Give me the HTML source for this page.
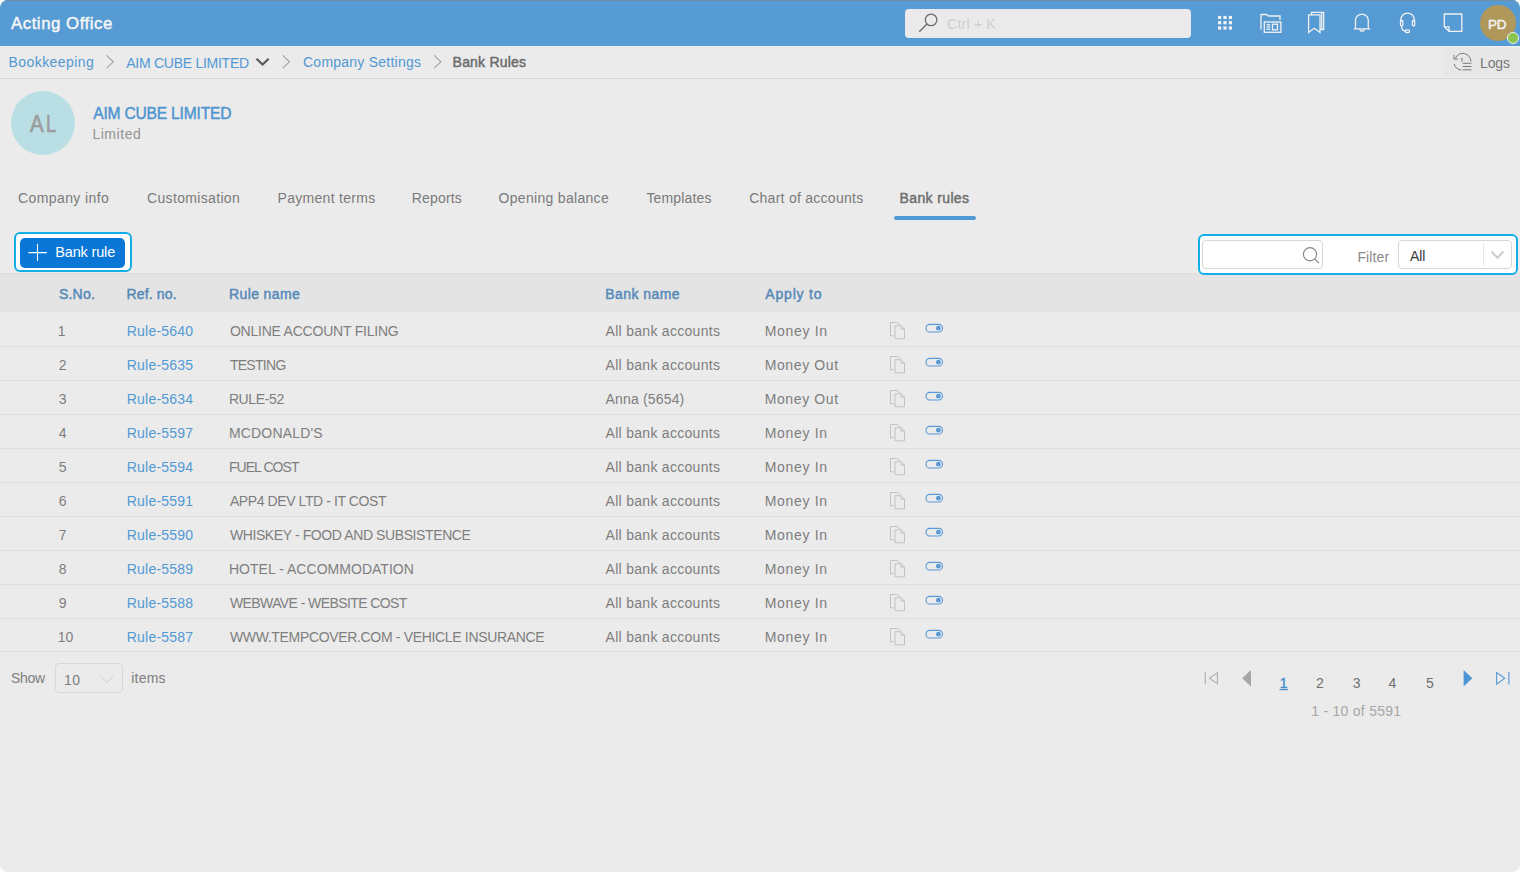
<!DOCTYPE html>
<html><head><meta charset="utf-8"><title>Bank Rules</title>
<style>
*{box-sizing:border-box;margin:0;padding:0}
html,body{width:1520px;height:872px;overflow:hidden;background:#ffffff;font-family:"Liberation Sans",sans-serif}
#app{position:absolute;left:0;top:0;width:1520px;height:872px;background:#ebebeb;border-radius:8px;overflow:hidden}
.t{position:absolute;white-space:nowrap;line-height:normal}
.a{position:absolute}
svg.a{overflow:visible}
#hdr{left:0;top:0;width:1520px;height:46px;background:#569bd3;border-top:1px solid #6a8eab}
#srch{left:905px;top:9px;width:286px;height:28.5px;background:#eaeaea;border-radius:4px}
#avatar{left:1480px;top:5px;width:36px;height:36px;border-radius:50%;background:#b0985b}
#dot{left:1506.5px;top:31.5px;width:12px;height:12px;border-radius:50%;background:#8bc550;border:1.6px solid #f2f2f2}
#crumbline{left:0;top:78px;width:1520px;height:1px;background:#d9d9d9}
#hline{left:0;top:46px;width:1520px;height:1px;background:#f0eeed}
#logs{left:1444px;top:47.5px;width:90px;height:28.5px;background:#e7e7e7;border-radius:4px}
#coav{left:11px;top:90.5px;width:64px;height:64px;border-radius:50%;background:#b9dfe5}
#tabline{left:894px;top:216px;width:81.5px;height:3.8px;border-radius:2px;background:#4f9ad5}
#btnring{left:14px;top:232px;width:118px;height:40px;border:2.2px solid #14aee9;border-radius:6px;background:#ffffff}
#btn{left:20px;top:238px;width:105px;height:29.5px;border-radius:5px;background:#0a76d6}
#fring{left:1198px;top:234px;width:320px;height:40.5px;border:2.3px solid #14aee9;border-radius:6px;background:#ffffff}
#finput{left:1202px;top:240px;width:121px;height:29px;border:1px solid #d6d6d6;border-radius:4px;background:#ffffff}
#fsel{left:1398px;top:240px;width:114px;height:29px;border:1px solid #d6d6d6;border-radius:4px;background:#ffffff}
#fdiv{left:1483px;top:243px;width:1px;height:23px;background:#e9e9e9}
#thead{left:0;top:273px;width:1520px;height:39px;background:#e4e4e4;border-top:1px solid #e0dfdd}
.rl{position:absolute;left:0;width:1520px;height:1px;background:#dedede}
#ssel{left:55px;top:663px;width:68px;height:30px;border:1px solid #d8d8d8;border-radius:4px}

</style></head>
<body>
<div id="app">
<div class="a" id="thead"></div>
<div class="a" id="hdr"></div>
<div class="a" id="hline"></div>
<div class="a" id="srch"></div>
<svg class="a" style="left:0;top:0" width="1" height="1"><circle cx="931.1" cy="19.9" r="5.8" fill="none" stroke="#6c6c6c" stroke-width="1.3"/><line x1="927" y1="24" x2="919.3" y2="31.8" stroke="#6c6c6c" stroke-width="1.3"/></svg>
<svg class="a" style="left:0;top:0" width="1" height="1"><rect x="1218" y="15.9" width="3.2" height="3.2" fill="#f3f3f3"/><rect x="1218" y="21.1" width="3.2" height="3.2" fill="#f3f3f3"/><rect x="1218" y="26.4" width="3.2" height="3.2" fill="#f3f3f3"/><rect x="1223.4" y="15.9" width="3.2" height="3.2" fill="#f3f3f3"/><rect x="1223.4" y="21.1" width="3.2" height="3.2" fill="#f3f3f3"/><rect x="1223.4" y="26.4" width="3.2" height="3.2" fill="#f3f3f3"/><rect x="1228.8" y="15.9" width="3.2" height="3.2" fill="#f3f3f3"/><rect x="1228.8" y="21.1" width="3.2" height="3.2" fill="#f3f3f3"/><rect x="1228.8" y="26.4" width="3.2" height="3.2" fill="#f3f3f3"/></svg>
<svg class="a" style="left:0;top:0" width="1" height="1" fill="none" stroke="#f1f1f1" stroke-width="1.3"><path d="M1261 29.5 V14.5 H1266.5 L1268.5 16 H1280 V20"/><rect x="1264.3" y="22" width="16.6" height="10.3"/><rect x="1272.5" y="24.2" width="5" height="5.6"/><line x1="1266.5" y1="24.8" x2="1270.3" y2="24.8"/><line x1="1266.5" y1="27" x2="1270.3" y2="27"/><line x1="1266.5" y1="29.2" x2="1270.3" y2="29.2"/></svg>
<svg class="a" style="left:0;top:0" width="1" height="1" fill="none" stroke="#f1f1f1" stroke-width="1.3"><path d="M1308.6 14.8 H1320 V32.5 L1314.3 28.2 L1308.6 32.5 Z"/><path d="M1311.5 14.8 V12.3 H1323.7 V29.5 L1320 29.5"/><line x1="1321.7" y1="12.3" x2="1321.7" y2="29.5"/></svg>
<svg class="a" style="left:0;top:0" width="1" height="1" fill="none" stroke="#f1f1f1" stroke-width="1.3"><path d="M1355.5 28.5 V20.5 A6.3 6.3 0 0 1 1368.3 20.5 V28.5"/><line x1="1353.8" y1="28.8" x2="1370.2" y2="28.8"/><path d="M1359.8 29 A2.2 2.2 0 0 0 1364.2 29"/></svg>
<svg class="a" style="left:0;top:0" width="1" height="1" fill="none" stroke="#f1f1f1" stroke-width="1.3"><path d="M1400.8 22 V19.8 A6.8 6.8 0 0 1 1414.4 19.8 V22"/><rect x="1400.5" y="20.5" width="2.3" height="5.3" rx="0.8"/><rect x="1412.4" y="20.5" width="2.3" height="5.3" rx="0.8"/><path d="M1401.6 26 Q1401.6 31 1405.5 31"/><rect x="1405.3" y="29.8" width="4.2" height="2.7" rx="1.3"/></svg>
<svg class="a" style="left:0;top:0" width="1" height="1" fill="none" stroke="#f1f1f1" stroke-width="1.3"><path d="M1444.3 14 H1461.8 V31.3 H1449 L1444.3 26.8 Z"/><path d="M1444.3 26.8 H1449 V31.3"/></svg>
<div class="a" id="avatar"></div>
<div class="a" id="dot"></div>
<div class="a" id="crumbline"></div>
<svg class="a" style="left:0;top:0" width="1" height="1" fill="none" stroke="#a5a09b" stroke-width="1.1"><path d="M106.6 55.3 L113.3 61.8 L106.6 68.2"/><path d="M282.8 55.3 L289.5 61.8 L282.8 68.2"/><path d="M434.2 55.3 L440.9 61.8 L434.2 68.2"/></svg>
<svg class="a" style="left:0;top:0" width="1" height="1" fill="none" stroke="#5a5a5a" stroke-width="2.2"><path d="M256.5 58.8 L262.6 64.6 L268.7 58.8"/></svg>
<div class="a" id="logs"></div>
<svg class="a" style="left:0;top:0" width="1" height="1" fill="none" stroke="#7a7a7a" stroke-width="1"><path d="M1470.9 61.6 A8.1 8.1 0 0 0 1455.3 58.4"/><path d="M1453.9 55 V59.1 H1458"/><path d="M1454.2 64 A8.3 8.3 0 0 0 1461.2 70"/><line x1="1461.9" y1="57.8" x2="1461.9" y2="61.8"/><line x1="1462.6" y1="63.3" x2="1471.4" y2="63.3"/><line x1="1462.6" y1="66.5" x2="1471.4" y2="66.5"/><line x1="1462.6" y1="69.8" x2="1471.4" y2="69.8"/></svg>
<div class="a" id="coav"></div>
<div class="a" id="tabline"></div>
<div class="a" id="btnring"></div>
<div class="a" id="btn"></div>
<svg class="a" style="left:0;top:0" width="1" height="1" stroke="#ffffff" stroke-width="1.1"><line x1="28.4" y1="252.6" x2="46.8" y2="252.6"/><line x1="37.5" y1="243.8" x2="37.5" y2="261"/></svg>
<div class="a" id="fring"></div>
<div class="a" id="finput"></div>
<svg class="a" style="left:0;top:0" width="1" height="1" fill="none" stroke="#868686" stroke-width="1.15"><circle cx="1310" cy="254.2" r="6.6"/><line x1="1314.7" y1="258.9" x2="1318.8" y2="263"/></svg>
<div class="a" id="fsel"></div>
<div class="a" id="fdiv"></div>
<svg class="a" style="left:0;top:0" width="1" height="1" fill="none" stroke="#cbcbcb" stroke-width="2"><path d="M1491.5 251.5 L1497.5 257.8 L1503.5 251.5"/></svg>
<div class="rl" style="top:346px"></div>
<div class="rl" style="top:380px"></div>
<div class="rl" style="top:414px"></div>
<div class="rl" style="top:448px"></div>
<div class="rl" style="top:482px"></div>
<div class="rl" style="top:516px"></div>
<div class="rl" style="top:550px"></div>
<div class="rl" style="top:584px"></div>
<div class="rl" style="top:618px"></div>
<div class="rl" style="top:651px"></div>
<svg class="a" style="left:0;top:0" width="1" height="1"><g fill="none" stroke="#c2c2c2" stroke-width="1"><path d="M894.5 335.8 H890.5 V322.5 H897.5 L900 325"/><path d="M895 325.8 H901.2 L904.5 329.2 V338.8 H895 Z"/><path d="M901.2 325.8 V329.2 H904.5"/></g><rect x="926" y="324.4" width="16.5" height="7.6" rx="3.8" fill="none" stroke="#5a9ad6" stroke-width="1.15"/><circle cx="938.4" cy="328.2" r="2.4" fill="#5a9ad6"/><g fill="none" stroke="#c2c2c2" stroke-width="1"><path d="M894.5 369.8 H890.5 V356.5 H897.5 L900 359"/><path d="M895 359.8 H901.2 L904.5 363.2 V372.8 H895 Z"/><path d="M901.2 359.8 V363.2 H904.5"/></g><rect x="926" y="358.4" width="16.5" height="7.6" rx="3.8" fill="none" stroke="#5a9ad6" stroke-width="1.15"/><circle cx="938.4" cy="362.2" r="2.4" fill="#5a9ad6"/><g fill="none" stroke="#c2c2c2" stroke-width="1"><path d="M894.5 403.8 H890.5 V390.5 H897.5 L900 393"/><path d="M895 393.8 H901.2 L904.5 397.2 V406.8 H895 Z"/><path d="M901.2 393.8 V397.2 H904.5"/></g><rect x="926" y="392.4" width="16.5" height="7.6" rx="3.8" fill="none" stroke="#5a9ad6" stroke-width="1.15"/><circle cx="938.4" cy="396.2" r="2.4" fill="#5a9ad6"/><g fill="none" stroke="#c2c2c2" stroke-width="1"><path d="M894.5 437.8 H890.5 V424.5 H897.5 L900 427"/><path d="M895 427.8 H901.2 L904.5 431.2 V440.8 H895 Z"/><path d="M901.2 427.8 V431.2 H904.5"/></g><rect x="926" y="426.4" width="16.5" height="7.6" rx="3.8" fill="none" stroke="#5a9ad6" stroke-width="1.15"/><circle cx="938.4" cy="430.2" r="2.4" fill="#5a9ad6"/><g fill="none" stroke="#c2c2c2" stroke-width="1"><path d="M894.5 471.8 H890.5 V458.5 H897.5 L900 461"/><path d="M895 461.8 H901.2 L904.5 465.2 V474.8 H895 Z"/><path d="M901.2 461.8 V465.2 H904.5"/></g><rect x="926" y="460.4" width="16.5" height="7.6" rx="3.8" fill="none" stroke="#5a9ad6" stroke-width="1.15"/><circle cx="938.4" cy="464.2" r="2.4" fill="#5a9ad6"/><g fill="none" stroke="#c2c2c2" stroke-width="1"><path d="M894.5 505.8 H890.5 V492.5 H897.5 L900 495"/><path d="M895 495.8 H901.2 L904.5 499.2 V508.8 H895 Z"/><path d="M901.2 495.8 V499.2 H904.5"/></g><rect x="926" y="494.4" width="16.5" height="7.6" rx="3.8" fill="none" stroke="#5a9ad6" stroke-width="1.15"/><circle cx="938.4" cy="498.2" r="2.4" fill="#5a9ad6"/><g fill="none" stroke="#c2c2c2" stroke-width="1"><path d="M894.5 539.8 H890.5 V526.5 H897.5 L900 529"/><path d="M895 529.8 H901.2 L904.5 533.2 V542.8 H895 Z"/><path d="M901.2 529.8 V533.2 H904.5"/></g><rect x="926" y="528.4" width="16.5" height="7.6" rx="3.8" fill="none" stroke="#5a9ad6" stroke-width="1.15"/><circle cx="938.4" cy="532.2" r="2.4" fill="#5a9ad6"/><g fill="none" stroke="#c2c2c2" stroke-width="1"><path d="M894.5 573.8 H890.5 V560.5 H897.5 L900 563"/><path d="M895 563.8 H901.2 L904.5 567.2 V576.8 H895 Z"/><path d="M901.2 563.8 V567.2 H904.5"/></g><rect x="926" y="562.4" width="16.5" height="7.6" rx="3.8" fill="none" stroke="#5a9ad6" stroke-width="1.15"/><circle cx="938.4" cy="566.2" r="2.4" fill="#5a9ad6"/><g fill="none" stroke="#c2c2c2" stroke-width="1"><path d="M894.5 607.8 H890.5 V594.5 H897.5 L900 597"/><path d="M895 597.8 H901.2 L904.5 601.2 V610.8 H895 Z"/><path d="M901.2 597.8 V601.2 H904.5"/></g><rect x="926" y="596.4" width="16.5" height="7.6" rx="3.8" fill="none" stroke="#5a9ad6" stroke-width="1.15"/><circle cx="938.4" cy="600.2" r="2.4" fill="#5a9ad6"/><g fill="none" stroke="#c2c2c2" stroke-width="1"><path d="M894.5 641.8 H890.5 V628.5 H897.5 L900 631"/><path d="M895 631.8 H901.2 L904.5 635.2 V644.8 H895 Z"/><path d="M901.2 631.8 V635.2 H904.5"/></g><rect x="926" y="630.4" width="16.5" height="7.6" rx="3.8" fill="none" stroke="#5a9ad6" stroke-width="1.15"/><circle cx="938.4" cy="634.2" r="2.4" fill="#5a9ad6"/></svg>
<div class="a" id="ssel"></div>
<svg class="a" style="left:0;top:0" width="1" height="1" fill="none" stroke="#cfcfcf" stroke-width="1"><path d="M100.3 676 L107 682.6 L113.7 676"/></svg>
<svg class="a" style="left:0;top:0" width="1" height="1"><line x1="1205.3" y1="672" x2="1205.3" y2="684.6" stroke="#b3b3b3" stroke-width="1.2"/><path d="M1217.4 672.8 L1209.4 678.3 L1217.4 683.8 Z" fill="none" stroke="#b3b3b3" stroke-width="1.1"/><path d="M1251 670 L1242.2 678.2 L1251 686.4 Z" fill="#a6a6a6"/><line x1="1279.5" y1="689.6" x2="1288" y2="689.6" stroke="#4a90cc" stroke-width="1.2"/><path d="M1463.6 670 L1472.3 678.2 L1463.6 686.4 Z" fill="#4c96d6"/><path d="M1496.6 672.5 L1504.8 678.3 L1496.6 684.2 Z" fill="none" stroke="#5a9ad6" stroke-width="1.1"/><line x1="1508.9" y1="672" x2="1508.9" y2="684.6" stroke="#5a9ad6" stroke-width="1.2"/></svg>
<span class="t" style="left:11.00px;top:14.04px;font-size:16.8px;color:#f6f6f6;-webkit-text-stroke:0.45px #f6f6f6;letter-spacing:0.542px">Acting Office</span>
<span class="t" style="left:947.00px;top:16.26px;font-size:14.5px;color:#cfcfcf;letter-spacing:0.018px">Ctrl + K</span>
<span class="t" style="left:1488.00px;top:17.08px;font-size:13.5px;color:#f4f4f4;-webkit-text-stroke:0.45px #f4f4f4;letter-spacing:-0.304px">PD</span>
<span class="t" style="left:8.60px;top:53.92px;font-size:14px;color:#5299d4;letter-spacing:0.423px">Bookkeeping</span>
<span class="t" style="left:126.20px;top:54.62px;font-size:14px;color:#5299d4;letter-spacing:-0.259px">AIM CUBE LIMITED</span>
<span class="t" style="left:303.00px;top:54.32px;font-size:14px;color:#5299d4;letter-spacing:0.240px">Company Settings</span>
<span class="t" style="left:452.60px;top:54.32px;font-size:14px;color:#6a6a6a;-webkit-text-stroke:0.45px #6a6a6a;letter-spacing:0.201px">Bank Rules</span>
<span class="t" style="left:1480.00px;top:55.12px;font-size:14px;color:#787878;letter-spacing:-0.119px">Logs</span>
<span class="t" style="left:29.60px;top:110.54px;font-size:23px;color:#9c9c9c;transform:scaleX(0.8875);transform-origin:0 0;-webkit-text-stroke:0.7px #9c9c9c">A</span>
<span class="t" style="left:45.72px;top:110.54px;font-size:23px;color:#9c9c9c;transform:scaleX(0.7833);transform-origin:0 0;-webkit-text-stroke:0.7px #9c9c9c">L</span>
<span class="t" style="left:93.20px;top:105.25px;font-size:15.6px;color:#4f95d0;-webkit-text-stroke:0.45px #4f95d0;letter-spacing:-0.198px">AIM CUBE LIMITED</span>
<span class="t" style="left:92.40px;top:125.82px;font-size:14px;color:#939393;letter-spacing:0.543px">Limited</span>
<span class="t" style="left:18.00px;top:189.92px;font-size:14px;color:#7a7a7a;letter-spacing:0.401px">Company info</span>
<span class="t" style="left:147.00px;top:189.92px;font-size:14px;color:#7a7a7a;letter-spacing:0.340px">Customisation</span>
<span class="t" style="left:277.50px;top:189.92px;font-size:14px;color:#7a7a7a;letter-spacing:0.305px">Payment terms</span>
<span class="t" style="left:411.80px;top:189.92px;font-size:14px;color:#7a7a7a;letter-spacing:0.163px">Reports</span>
<span class="t" style="left:498.50px;top:189.92px;font-size:14px;color:#7a7a7a;letter-spacing:0.309px">Opening balance</span>
<span class="t" style="left:646.40px;top:189.92px;font-size:14px;color:#7a7a7a;letter-spacing:0.149px">Templates</span>
<span class="t" style="left:749.20px;top:189.92px;font-size:14px;color:#7a7a7a;letter-spacing:0.267px">Chart of accounts</span>
<span class="t" style="left:899.60px;top:190.12px;font-size:14px;color:#6e6e6e;-webkit-text-stroke:0.45px #6e6e6e;letter-spacing:0.362px">Bank rules</span>
<span class="t" style="left:55.20px;top:244.16px;font-size:14.5px;color:#ffffff;letter-spacing:-0.149px">Bank rule</span>
<span class="t" style="left:1357.40px;top:248.92px;font-size:14px;color:#8a8a8a;letter-spacing:0.110px">Filter</span>
<span class="t" style="left:1410.00px;top:248.12px;font-size:14px;color:#3a3a3a;letter-spacing:-0.074px">All</span>
<span class="t" style="left:58.90px;top:286.32px;font-size:14px;color:#5589b8;-webkit-text-stroke:0.45px #5589b8;letter-spacing:0.219px">S.No.</span>
<span class="t" style="left:126.40px;top:286.32px;font-size:14px;color:#5589b8;-webkit-text-stroke:0.45px #5589b8;letter-spacing:0.180px">Ref. no.</span>
<span class="t" style="left:229.00px;top:286.32px;font-size:14px;color:#5589b8;-webkit-text-stroke:0.45px #5589b8;letter-spacing:0.385px">Rule name</span>
<span class="t" style="left:605.30px;top:286.32px;font-size:14px;color:#5589b8;-webkit-text-stroke:0.45px #5589b8;letter-spacing:0.433px">Bank name</span>
<span class="t" style="left:765.30px;top:286.32px;font-size:14px;color:#5589b8;-webkit-text-stroke:0.45px #5589b8;letter-spacing:0.814px">Apply to</span>
<span class="t" style="left:57.80px;top:322.92px;font-size:14px;color:#7e7e7e">1</span>
<span class="t" style="left:126.80px;top:322.92px;font-size:14px;color:#5299d4;letter-spacing:0.211px">Rule-5640</span>
<span class="t" style="left:229.90px;top:322.92px;font-size:14px;color:#7e7e7e;letter-spacing:-0.218px">ONLINE ACCOUNT FILING</span>
<span class="t" style="left:605.60px;top:322.92px;font-size:14px;color:#7e7e7e;letter-spacing:0.286px">All bank accounts</span>
<span class="t" style="left:764.70px;top:322.92px;font-size:14px;color:#7e7e7e;letter-spacing:0.686px">Money In</span>
<span class="t" style="left:58.80px;top:356.92px;font-size:14px;color:#7e7e7e">2</span>
<span class="t" style="left:126.80px;top:356.92px;font-size:14px;color:#5299d4;letter-spacing:0.211px">Rule-5635</span>
<span class="t" style="left:229.90px;top:356.92px;font-size:14px;color:#7e7e7e;letter-spacing:-0.713px">TESTING</span>
<span class="t" style="left:605.60px;top:356.92px;font-size:14px;color:#7e7e7e;letter-spacing:0.286px">All bank accounts</span>
<span class="t" style="left:764.70px;top:356.92px;font-size:14px;color:#7e7e7e;letter-spacing:0.614px">Money Out</span>
<span class="t" style="left:58.80px;top:390.92px;font-size:14px;color:#7e7e7e">3</span>
<span class="t" style="left:126.80px;top:390.92px;font-size:14px;color:#5299d4;letter-spacing:0.211px">Rule-5634</span>
<span class="t" style="left:228.90px;top:390.92px;font-size:14px;color:#7e7e7e;letter-spacing:-0.382px">RULE-52</span>
<span class="t" style="left:605.60px;top:390.92px;font-size:14px;color:#7e7e7e;letter-spacing:0.161px">Anna (5654)</span>
<span class="t" style="left:764.70px;top:390.92px;font-size:14px;color:#7e7e7e;letter-spacing:0.614px">Money Out</span>
<span class="t" style="left:58.80px;top:424.92px;font-size:14px;color:#7e7e7e">4</span>
<span class="t" style="left:126.80px;top:424.92px;font-size:14px;color:#5299d4;letter-spacing:0.211px">Rule-5597</span>
<span class="t" style="left:228.90px;top:424.92px;font-size:14px;color:#7e7e7e;letter-spacing:0.179px">MCDONALD'S</span>
<span class="t" style="left:605.60px;top:424.92px;font-size:14px;color:#7e7e7e;letter-spacing:0.286px">All bank accounts</span>
<span class="t" style="left:764.70px;top:424.92px;font-size:14px;color:#7e7e7e;letter-spacing:0.686px">Money In</span>
<span class="t" style="left:58.80px;top:458.92px;font-size:14px;color:#7e7e7e">5</span>
<span class="t" style="left:126.80px;top:458.92px;font-size:14px;color:#5299d4;letter-spacing:0.211px">Rule-5594</span>
<span class="t" style="left:228.90px;top:458.92px;font-size:14px;color:#7e7e7e;letter-spacing:-0.927px">FUEL COST</span>
<span class="t" style="left:605.60px;top:458.92px;font-size:14px;color:#7e7e7e;letter-spacing:0.286px">All bank accounts</span>
<span class="t" style="left:764.70px;top:458.92px;font-size:14px;color:#7e7e7e;letter-spacing:0.686px">Money In</span>
<span class="t" style="left:58.80px;top:492.92px;font-size:14px;color:#7e7e7e">6</span>
<span class="t" style="left:126.80px;top:492.92px;font-size:14px;color:#5299d4;letter-spacing:0.211px">Rule-5591</span>
<span class="t" style="left:229.90px;top:492.92px;font-size:14px;color:#7e7e7e;letter-spacing:-0.409px">APP4 DEV LTD - IT COST</span>
<span class="t" style="left:605.60px;top:492.92px;font-size:14px;color:#7e7e7e;letter-spacing:0.286px">All bank accounts</span>
<span class="t" style="left:764.70px;top:492.92px;font-size:14px;color:#7e7e7e;letter-spacing:0.686px">Money In</span>
<span class="t" style="left:58.80px;top:526.92px;font-size:14px;color:#7e7e7e">7</span>
<span class="t" style="left:126.80px;top:526.92px;font-size:14px;color:#5299d4;letter-spacing:0.211px">Rule-5590</span>
<span class="t" style="left:229.90px;top:526.92px;font-size:14px;color:#7e7e7e;letter-spacing:-0.398px">WHISKEY - FOOD AND SUBSISTENCE</span>
<span class="t" style="left:605.60px;top:526.92px;font-size:14px;color:#7e7e7e;letter-spacing:0.286px">All bank accounts</span>
<span class="t" style="left:764.70px;top:526.92px;font-size:14px;color:#7e7e7e;letter-spacing:0.686px">Money In</span>
<span class="t" style="left:58.80px;top:560.92px;font-size:14px;color:#7e7e7e">8</span>
<span class="t" style="left:126.80px;top:560.92px;font-size:14px;color:#5299d4;letter-spacing:0.211px">Rule-5589</span>
<span class="t" style="left:228.90px;top:560.92px;font-size:14px;color:#7e7e7e;letter-spacing:0.034px">HOTEL - ACCOMMODATION</span>
<span class="t" style="left:605.60px;top:560.92px;font-size:14px;color:#7e7e7e;letter-spacing:0.286px">All bank accounts</span>
<span class="t" style="left:764.70px;top:560.92px;font-size:14px;color:#7e7e7e;letter-spacing:0.686px">Money In</span>
<span class="t" style="left:58.80px;top:594.92px;font-size:14px;color:#7e7e7e">9</span>
<span class="t" style="left:126.80px;top:594.92px;font-size:14px;color:#5299d4;letter-spacing:0.211px">Rule-5588</span>
<span class="t" style="left:229.90px;top:594.92px;font-size:14px;color:#7e7e7e;letter-spacing:-0.587px">WEBWAVE - WEBSITE COST</span>
<span class="t" style="left:605.60px;top:594.92px;font-size:14px;color:#7e7e7e;letter-spacing:0.286px">All bank accounts</span>
<span class="t" style="left:764.70px;top:594.92px;font-size:14px;color:#7e7e7e;letter-spacing:0.686px">Money In</span>
<span class="t" style="left:57.80px;top:628.92px;font-size:14px;color:#7e7e7e">10</span>
<span class="t" style="left:126.80px;top:628.92px;font-size:14px;color:#5299d4;letter-spacing:0.211px">Rule-5587</span>
<span class="t" style="left:229.90px;top:628.92px;font-size:14px;color:#7e7e7e;letter-spacing:-0.332px">WWW.TEMPCOVER.COM - VEHICLE INSURANCE</span>
<span class="t" style="left:605.60px;top:628.92px;font-size:14px;color:#7e7e7e;letter-spacing:0.286px">All bank accounts</span>
<span class="t" style="left:764.70px;top:628.92px;font-size:14px;color:#7e7e7e;letter-spacing:0.686px">Money In</span>
<span class="t" style="left:10.90px;top:670.32px;font-size:14px;color:#7e7e7e;letter-spacing:-0.303px">Show</span>
<span class="t" style="left:64.00px;top:671.72px;font-size:14px;color:#7e7e7e;letter-spacing:0.514px">10</span>
<span class="t" style="left:131.30px;top:670.32px;font-size:14px;color:#7e7e7e;letter-spacing:0.213px">items</span>
<span class="t" style="left:1279.70px;top:674.92px;font-size:14px;color:#4a90cc;-webkit-text-stroke:0.45px #4a90cc">1</span>
<span class="t" style="left:1315.90px;top:674.72px;font-size:14px;color:#6e6e6e">2</span>
<span class="t" style="left:1352.80px;top:674.72px;font-size:14px;color:#6e6e6e">3</span>
<span class="t" style="left:1388.60px;top:674.72px;font-size:14px;color:#6e6e6e">4</span>
<span class="t" style="left:1426.00px;top:674.72px;font-size:14px;color:#6e6e6e">5</span>
<span class="t" style="left:1311.30px;top:703.32px;font-size:14px;color:#a6a6a6;letter-spacing:0.261px">1 - 10 of 5591</span>
</div>
</body></html>
